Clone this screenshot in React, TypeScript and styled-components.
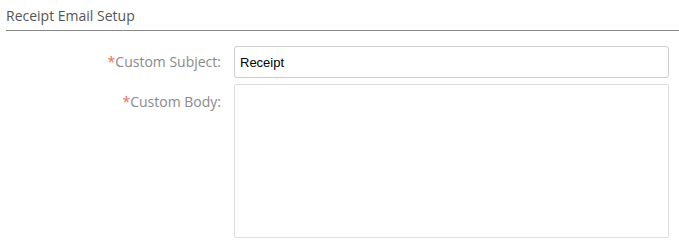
import styled, { createGlobalStyle } from 'styled-components';

const GlobalStyle = createGlobalStyle`
  body {
    margin: 0;
    background: #ffffff;
    font-family: "Open Sans", "Liberation Sans", sans-serif;
  }
`;

const Section = styled.section`
  padding: 0 10px 0 6px;
`;

const Title = styled.h2`
  margin: 0 -10px 0 0;
  padding-top: 8px;
  padding-bottom: 6px;
  font-size: 14px;
  font-weight: 400;
  line-height: 16px;
  color: #555555;
  border-bottom: 1px solid #888888;
`;

const Form = styled.div`
  display: flex;
  flex-direction: column;
  gap: 6px;
  padding-top: 15px;
`;

const Row = styled.div`
  display: flex;
  align-items: flex-start;
`;

const Label = styled.label<{ $offset: number }>`
  width: 215px;
  flex-shrink: 0;
  margin-right: 13px;
  padding-top: ${(p) => p.$offset}px;
  text-align: right;
  font-size: 14px;
  line-height: 18px;
  color: #8a8a8a;
`;

const Required = styled.span`
  color: #ef6b56;
`;

const TextInput = styled.input`
  box-sizing: border-box;
  width: 436px;
  height: 32px;
  padding: 0 5px;
  border: 1px solid #cccccc;
  border-radius: 3px;
  font-family: "Liberation Sans", Arial, sans-serif;
  font-size: 13px;
  color: #000000;
  outline: none;
`;

const TextArea = styled.textarea`
  box-sizing: border-box;
  width: 436px;
  height: 154px;
  padding: 5px;
  border: 1px solid #dddddd;
  border-radius: 2px;
  font-family: "Liberation Sans", Arial, sans-serif;
  font-size: 13px;
  resize: none;
  outline: none;
`;

export default function App() {
  return (
    <>
      <GlobalStyle />
      <Section>
        <Title>Receipt Email Setup</Title>
        <Form>
          <Row>
            <Label $offset={7}>
              <Required>*</Required>Custom Subject:
            </Label>
            <TextInput defaultValue="Receipt" />
          </Row>
          <Row>
            <Label $offset={9}>
              <Required>*</Required>Custom Body:
            </Label>
            <TextArea />
          </Row>
        </Form>
      </Section>
    </>
  );
}
